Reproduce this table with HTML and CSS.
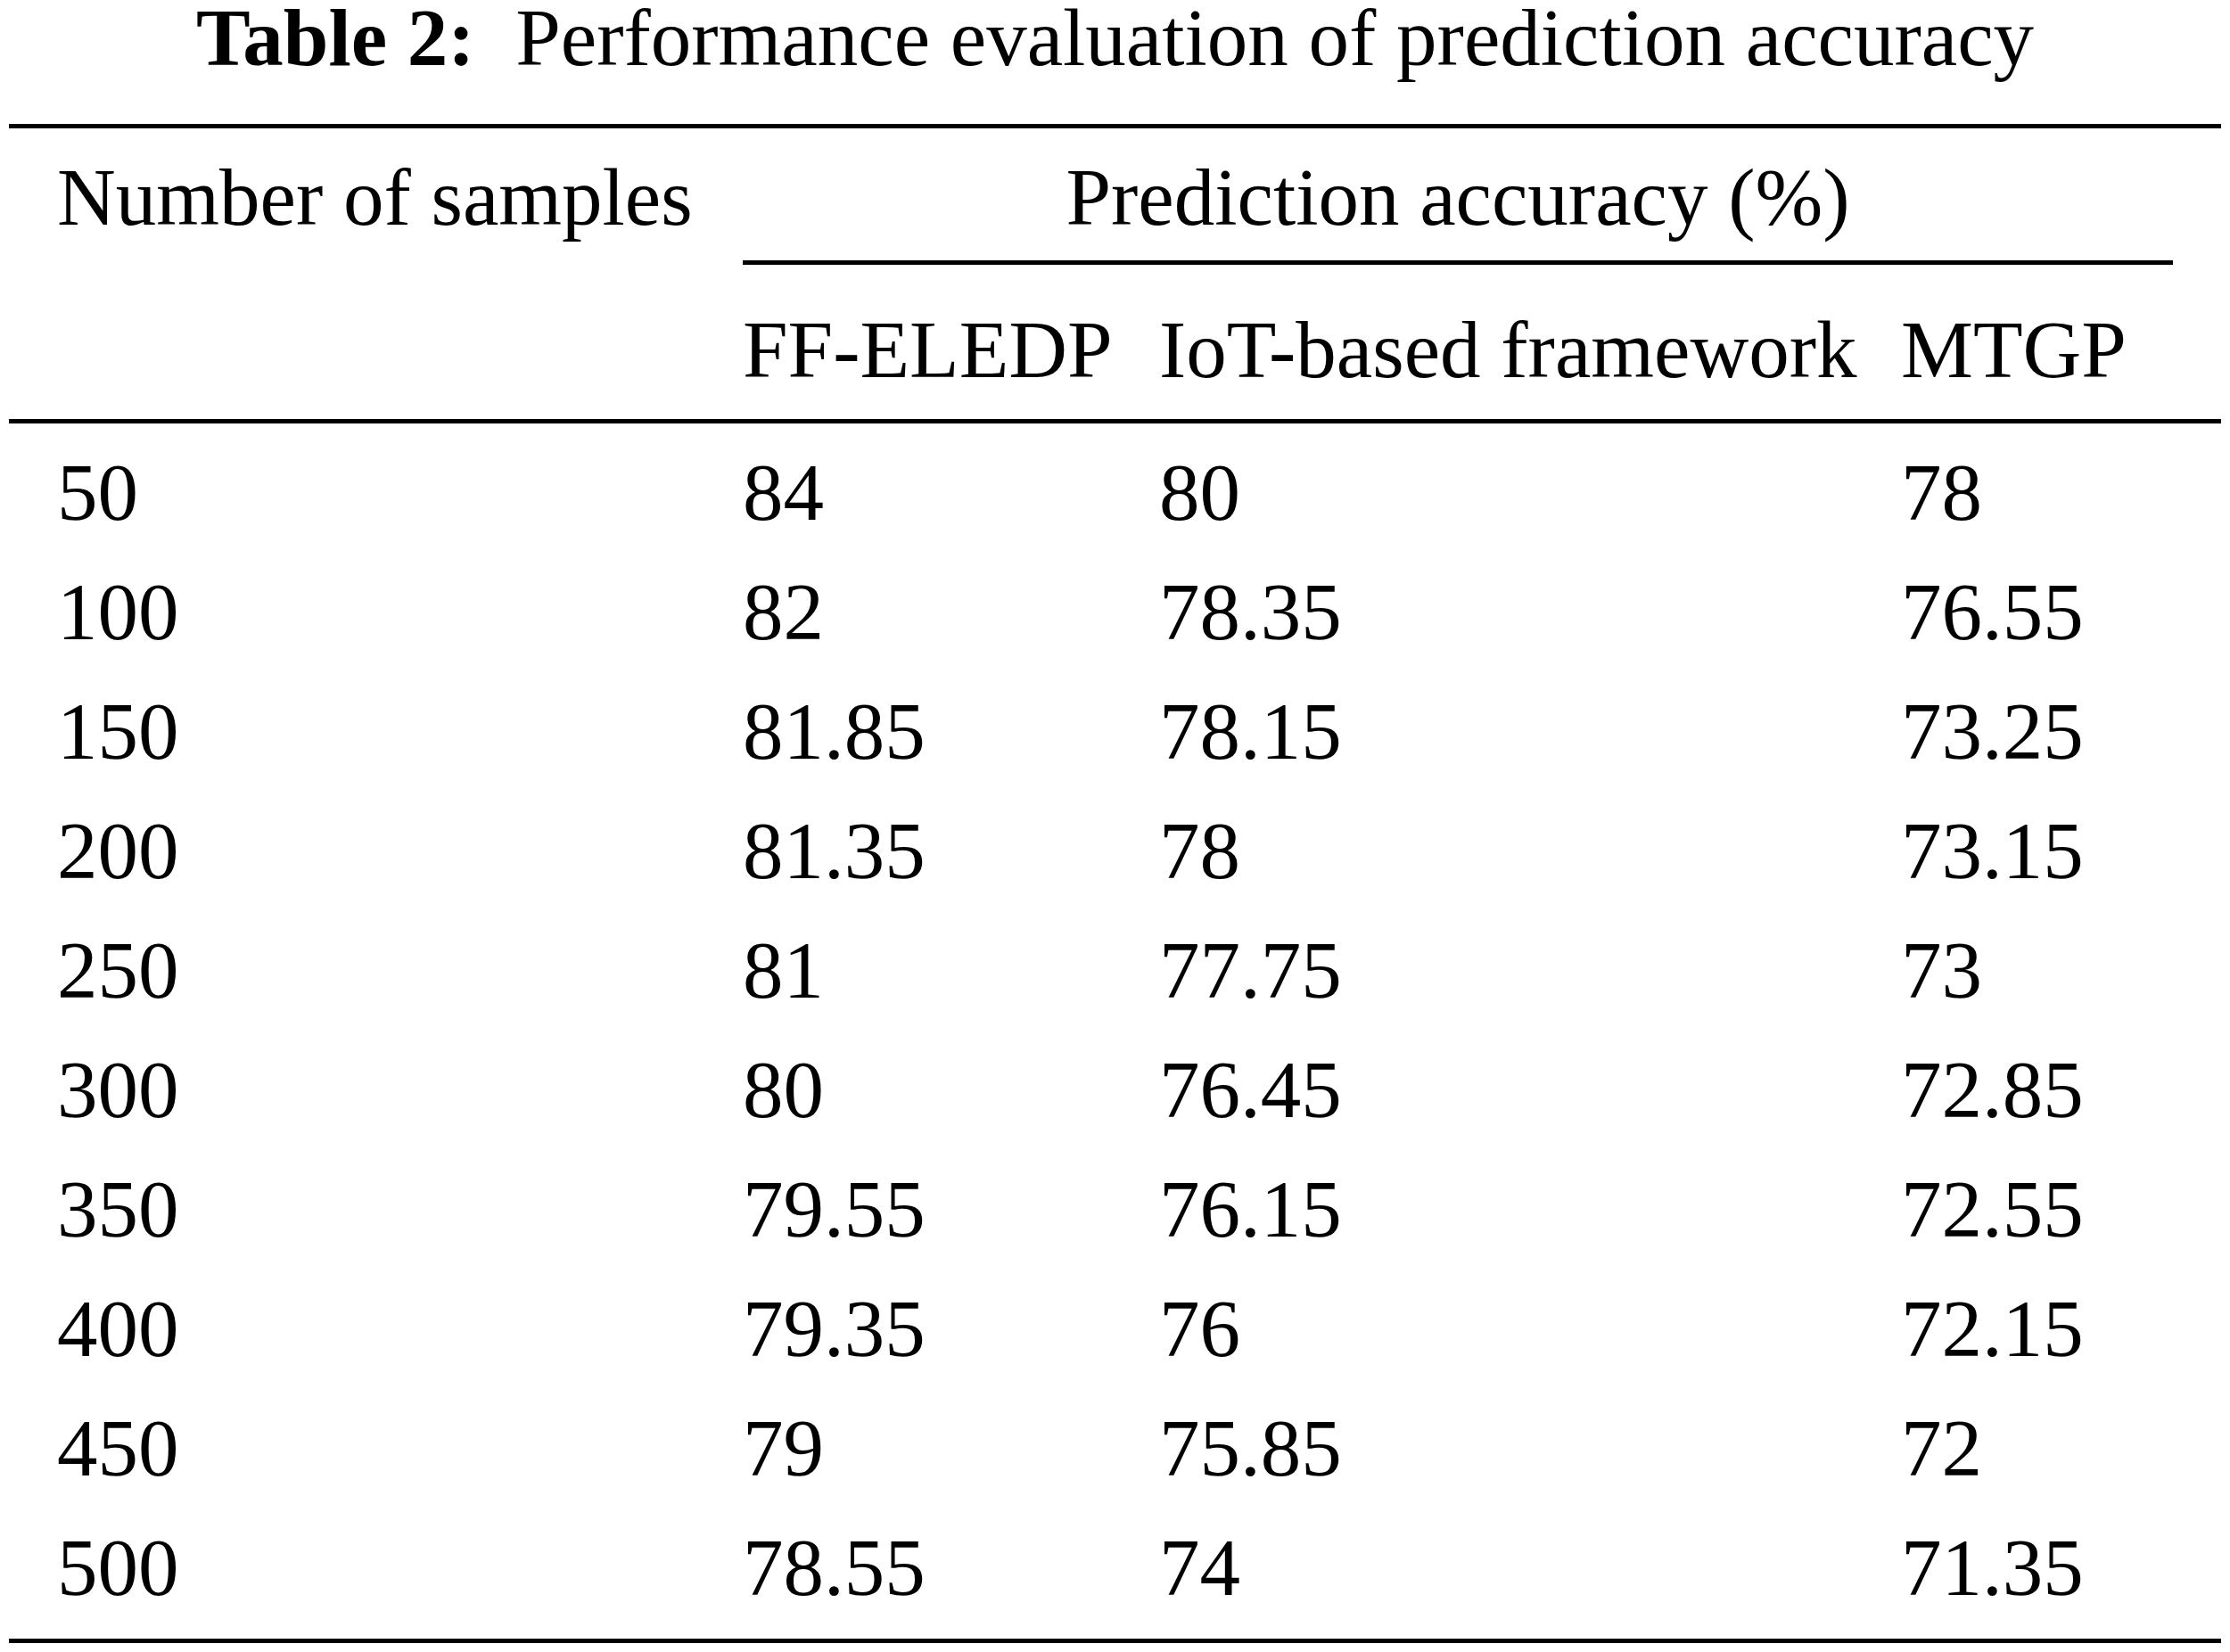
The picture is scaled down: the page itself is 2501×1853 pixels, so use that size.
FILE: index.html
```html
<!DOCTYPE html>
<html lang="en">
<head>
<meta charset="utf-8">
<title>Table 2</title>
<link rel="stylesheet" href="styles.css">
</head>
<body>
<div class="page">
  <div class="caption"><b>Table 2:</b>&nbsp; Performance evaluation of prediction accuracy</div>
  <table class="results">
    <colgroup>
      <col class="c1"><col class="c2"><col class="c3"><col class="c4">
    </colgroup>
    <thead>
      <tr class="h1">
        <th rowspan="2" class="first">Number of samples</th>
        <th colspan="3" class="group"><div class="group-label">Prediction accuracy (%)</div></th>
      </tr>
      <tr class="h2">
        <th>FF-ELEDP</th>
        <th>IoT-based framework</th>
        <th>MTGP</th>
      </tr>
    </thead>
    <tbody>
      <tr><td class="first">50</td><td>84</td><td>80</td><td>78</td></tr>
      <tr><td class="first">100</td><td>82</td><td>78.35</td><td>76.55</td></tr>
      <tr><td class="first">150</td><td>81.85</td><td>78.15</td><td>73.25</td></tr>
      <tr><td class="first">200</td><td>81.35</td><td>78</td><td>73.15</td></tr>
      <tr><td class="first">250</td><td>81</td><td>77.75</td><td>73</td></tr>
      <tr><td class="first">300</td><td>80</td><td>76.45</td><td>72.85</td></tr>
      <tr><td class="first">350</td><td>79.55</td><td>76.15</td><td>72.55</td></tr>
      <tr><td class="first">400</td><td>79.35</td><td>76</td><td>72.15</td></tr>
      <tr><td class="first">450</td><td>79</td><td>75.85</td><td>72</td></tr>
      <tr><td class="first">500</td><td>78.55</td><td>74</td><td>71.35</td></tr>
    </tbody>
  </table>
</div>
</body>
</html>
```

FILE: styles.css
```css
html, body {
  margin: 0;
  padding: 0;
  background: #ffffff;
}

body {
  font-family: "Liberation Serif", "Times New Roman", serif;
  font-size: 91px;
  color: #000000;
}

.page {
  width: 2501px;
  padding: 0 10px;
  box-sizing: border-box;
}

.caption {
  text-align: center;
  line-height: 85px;
  white-space: pre;
  margin-bottom: 54px;
}

.caption b {
  font-weight: bold;
}

.results {
  width: 2481px;
  table-layout: fixed;
  border-collapse: collapse;
  border-top: 5px solid #000;
  border-bottom: 5px solid #000;
}

.c1 { width: 823px; }
.c2 { width: 467px; }
.c3 { width: 832px; }
.c4 { width: 359px; }

.results th,
.results td {
  padding: 0;
  font-weight: normal;
  text-align: left;
  vertical-align: top;
  line-height: 100px;
  white-space: nowrap;
}

.results .first {
  padding-left: 54px;
}

.results thead {
  border-bottom: 5px solid #000;
}

.h1 th {
  padding-top: 28px;
}

.h1 .group {
  text-align: center;
}

.group-label {
  margin-right: 54px;
  padding-bottom: 20px;
  border-bottom: 5px solid #000;
}

.h2 th {
  padding-top: 46px;
  padding-bottom: 27px;
}

.results tbody td {
  padding-top: 17px;
  padding-bottom: 17px;
}

.results tbody tr:first-child td {
  padding-top: 28px;
}

.results tbody tr:last-child td {
  padding-bottom: 29px;
}
```
